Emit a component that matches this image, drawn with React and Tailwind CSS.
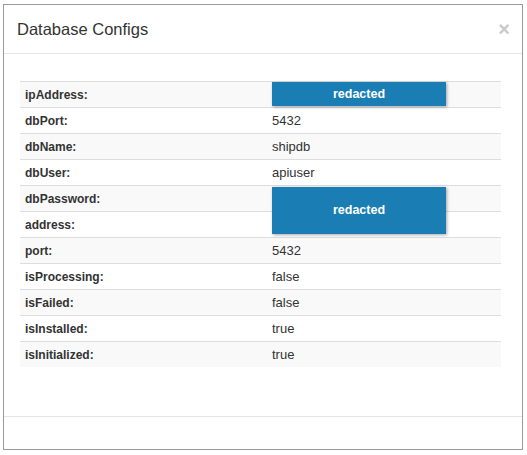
import React from "react";

const rows = [
  { label: "ipAddress:", value: "" },
  { label: "dbPort:", value: "5432" },
  { label: "dbName:", value: "shipdb" },
  { label: "dbUser:", value: "apiuser" },
  { label: "dbPassword:", value: "" },
  { label: "address:", value: "" },
  { label: "port:", value: "5432" },
  { label: "isProcessing:", value: "false" },
  { label: "isFailed:", value: "false" },
  { label: "isInstalled:", value: "true" },
  { label: "isInitialized:", value: "true" },
];

const Redacted = ({ className }) => (
  <div
    className={
      "absolute left-[252px] w-[174px] bg-[#1a7eb5] shadow-[1px_1px_3px_rgba(0,0,0,0.35)] flex items-center justify-center text-white font-bold text-[12.5px] " +
      className
    }
  >
    redacted
  </div>
);

const App = () => {
  return (
    <div
      className="w-[527px] h-[455px] bg-white pt-[4px] pl-[3px] text-[#333]"
      style={{ fontFamily: '"Liberation Sans", Arial, sans-serif' }}
    >
      <div className="w-[520px] h-[446px] border border-[#9a9a9a] flex flex-col">
        {/* header */}
        <div className="h-[49px] shrink-0 border-b border-[#e5e5e5] flex items-center pl-[13px] pr-[12px]">
          <h4 className="text-[16.5px] text-[#333] leading-none">Database Configs</h4>
          <span className="ml-auto text-[20px] font-bold text-[#c9c9c9] leading-none">×</span>
        </div>

        {/* body */}
        <div className="flex-1 pt-[27px] pl-[16px] pr-[21px]">
          <div className="relative">
            {rows.map((row, i) => (
              <div
                key={row.label}
                className={
                  "h-[26px] border-t border-[#dddddd] flex items-center " +
                  (i % 2 === 0 ? "bg-[#f9f9f9]" : "bg-white")
                }
              >
                <div className="w-[247px] pl-[5px] font-bold text-[12px]">{row.label}</div>
                <div className="pl-[5px] text-[13px]">{row.value}</div>
              </div>
            ))}
            <Redacted className="top-[1px] h-[24px]" />
            <Redacted className="top-[106px] h-[47px]" />
          </div>
        </div>

        {/* footer */}
        <div className="h-[33px] shrink-0 border-t border-[#e5e5e5]" />
      </div>
    </div>
  );
};

export default App;
